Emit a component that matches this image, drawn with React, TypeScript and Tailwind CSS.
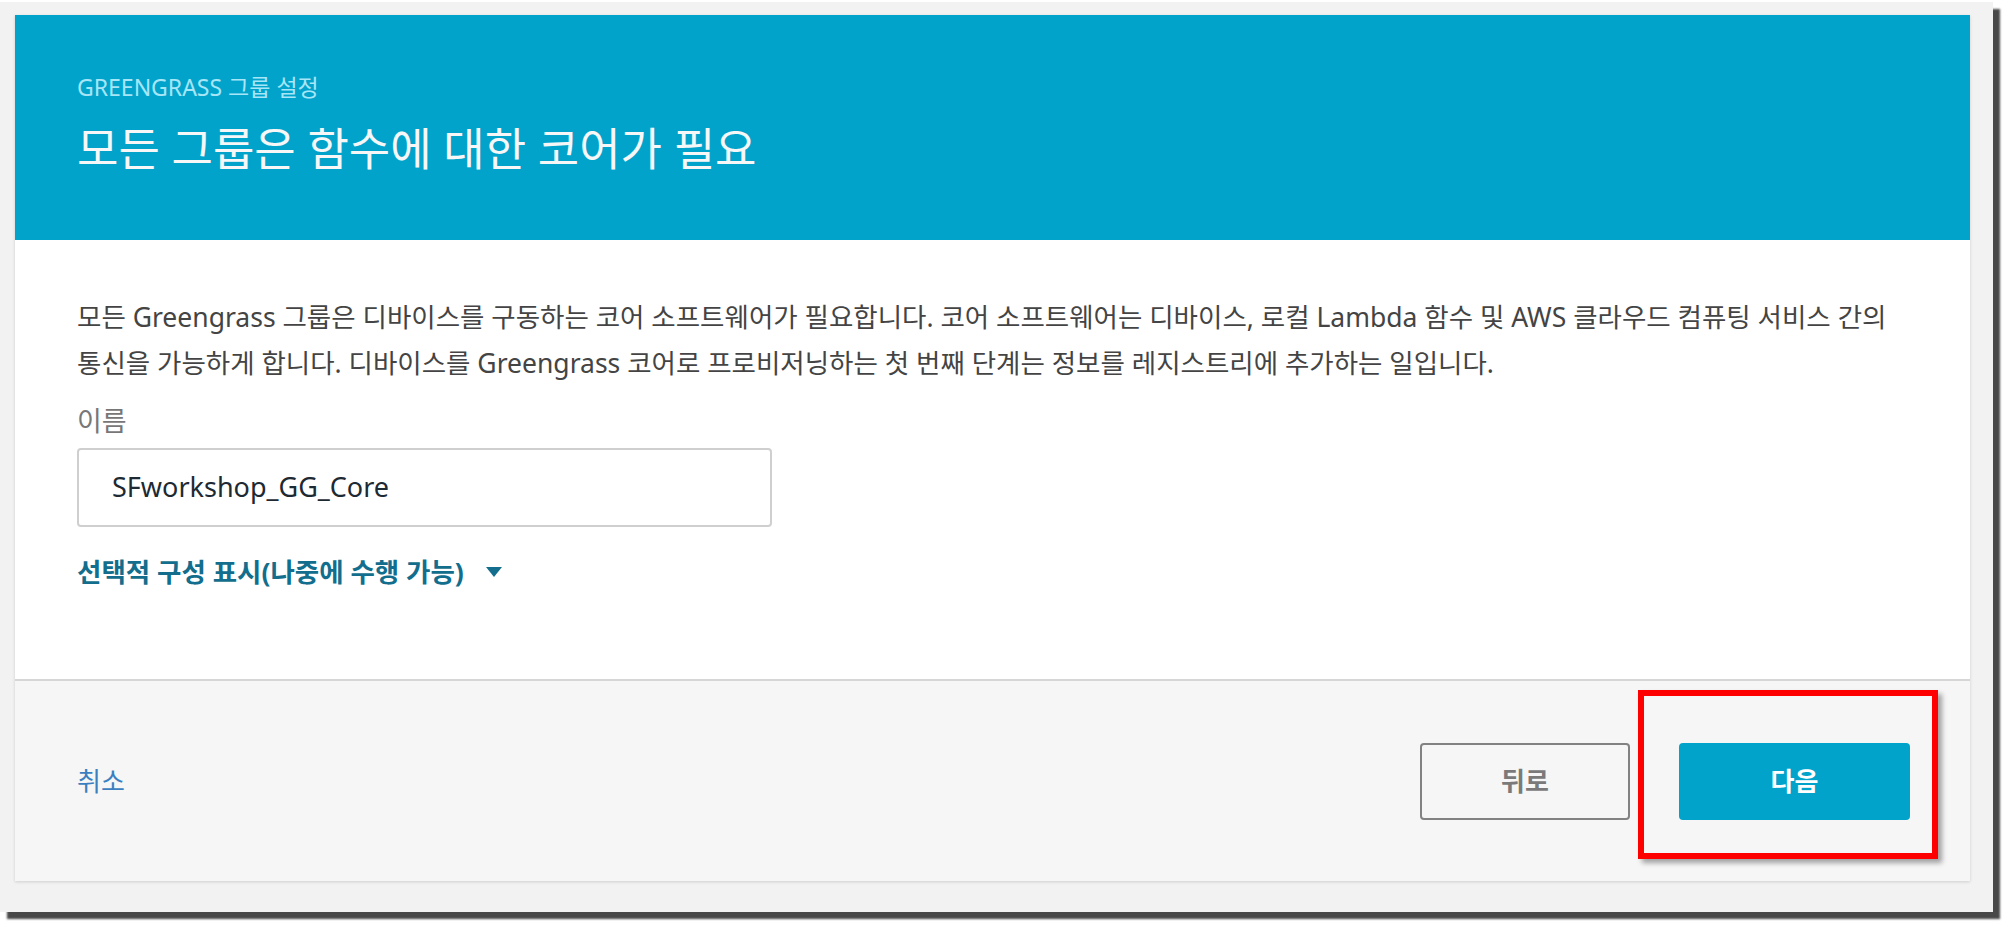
const font = {
  fontFamily: '"Noto Sans", "Noto Sans CJK KR", sans-serif',
};

const App = () => {
  return (
    <div className="w-[2014px] h-[927px] bg-white overflow-hidden" style={font}>
      <div className="relative mt-[2px] w-[1993px] h-[910px] bg-[#f2f2f2] shadow-[7px_7px_2px_rgba(40,40,40,0.85)] pl-[15px] pt-[13px]">
        <div className="w-[1955px] bg-white shadow-[0_1px_3px_rgba(0,0,0,0.15)]">
          {/* header */}
          <div className="h-[225px] bg-[#02a3cb] px-[62px] pt-[58px]">
            <div className="text-[23px] leading-[28px] text-[#a6e6f7]">
              GREENGRASS 그룹 설정
            </div>
            <h1 className="mt-[18px] text-[45px] leading-[60px] text-[#f7f7f7]">
              모든 그룹은 함수에 대한 코어가 필요
            </h1>
          </div>

          {/* body */}
          <div className="h-[439px] px-[62px] pt-[54px]">
            <p className="text-[26.5px] leading-[46px] text-[#444444] whitespace-nowrap">
              모든 Greengrass 그룹은 디바이스를 구동하는 코어 소프트웨어가 필요합니다. 코어 소프트웨어는 디바이스, 로컬 Lambda 함수 및 AWS 클라우드 컴퓨팅 서비스 간의
              <br />
              통신을 가능하게 합니다. 디바이스를 Greengrass 코어로 프로비저닝하는 첫 번째 단계는 정보를 레지스트리에 추가하는 일입니다.
            </p>
            <div className="mt-[19px] text-[27px] leading-[32px] text-[#777777]">이름</div>
            <div className="mt-[11px] w-[695px] h-[79px] border-2 border-[#cfcfcf] rounded-[4px] flex items-center pl-[33px]">
              <span className="text-[27px] text-[#1d2a33]">SFworkshop_GG_Core</span>
            </div>
            <div className="mt-[29px] flex items-center gap-[22px] text-[26.5px] leading-[32px] font-bold text-[#126e8c]">
              <span>선택적 구성 표시(나중에 수행 가능)</span>
              <svg width="16" height="10" viewBox="0 0 16 10">
                <path d="M0 0h16L8 10z" fill="#126e8c" />
              </svg>
            </div>
          </div>

          {/* footer */}
          <div className="h-[202px] border-t-2 border-[#d6d6d6] bg-[#f6f6f6] flex items-center justify-between pl-[62px] pr-[60px]">
            <span className="text-[26px] text-[#3b7fc0]">취소</span>
            <div className="flex items-center gap-[49px]">
              <button className="w-[210px] h-[77px] border-2 border-[#828282] rounded-[4px] text-[26px] font-semibold text-[#7a7a7a]">
                뒤로
              </button>
              <button className="w-[231px] h-[77px] rounded-[4px] bg-[#02a3cb] text-[26px] font-semibold text-white">
                다음
              </button>
            </div>
          </div>
        </div>

        {/* annotation */}
        <div className="absolute left-[1638px] top-[688px] w-[300px] h-[169px] border-[6px] border-[#ff0000] shadow-[4px_4px_5px_rgba(0,0,0,0.35)]" />
      </div>
    </div>
  );
};

export default App;
